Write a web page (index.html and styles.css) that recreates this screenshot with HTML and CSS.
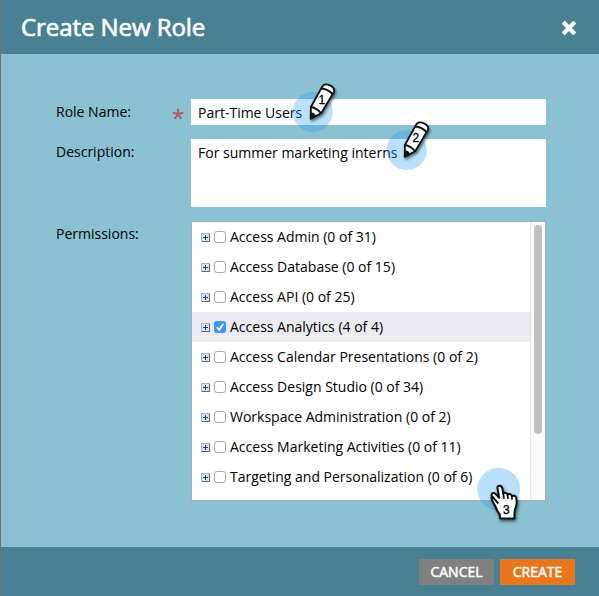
FILE: index.html
```html
<!DOCTYPE html>
<html lang="en">
<head>
<meta charset="utf-8">
<title>Create New Role</title>
<link rel="stylesheet" href="styles.css">
</head>
<body>
<svg width="0" height="0" class="defs" aria-hidden="true">
  <symbol id="plus" viewBox="0 0 9 9">
    <rect x=".5" y=".5" width="8" height="8" fill="#d8e3f0" stroke="#a3b5cf"/>
    <path d="M1 8.5H8.5V1" fill="none" stroke="#526b94"/>
    <path d="M2 4.5H7M4.5 2V7" stroke="#2a3c60"/>
  </symbol>
  <symbol id="pencil" viewBox="0 0 60 60">
    <circle cx="22.7" cy="37" r="20" fill="#2fa2f4" fill-opacity=".33"/>
    <g class="shadow" stroke="#111" stroke-width="1.8" stroke-linejoin="round">
      <path d="M20.8 43.6L20.9 32L32.2 11.8Q33.5 8.5 38 9.6Q45 12 44.2 16.5L31.2 38.3Z" fill="#fff"/>
      <path d="M20.9 32Q27 33 31.2 38.3M31.2 13.5Q38 14 42.6 19.2" fill="none"/>
      <path d="M20.8 43.6L21.1 38.2Q24 38.6 25.5 41.2Z" fill="#111"/>
    </g>
  </symbol>
</svg>
<main class="dialog">
  <header class="header">
    <h1>Create New Role</h1>
    <svg class="close" viewBox="0 0 14 14"><path d="M2.6 2.6L11.4 11.4M11.4 2.6L2.6 11.4" stroke="#fff" stroke-width="4.2" stroke-linecap="square"/></svg>
  </header>
  <form class="content">
    <label class="name-label">Role Name:</label>
    <svg class="required" viewBox="0 0 12 12"><path d="M6 6V.8M6 6L.8 4.8M6 6L11.2 4.8M6 6L2.8 10.7M6 6L9.2 10.7" stroke="#b95860" stroke-width="1.9"/></svg>
    <div class="field">Part-Time Users</div>
    <label class="desc-label">Description:</label>
    <div class="field area">For summer marketing interns</div>
    <label class="perm-label">Permissions:</label>
    <div class="tree">
      <ul>
        <li><svg class="plus"><use href="#plus"/></svg><i class="check"></i><span>Access Admin (0 of 31)</span></li>
        <li><svg class="plus"><use href="#plus"/></svg><i class="check"></i><span>Access Database (0 of 15)</span></li>
        <li><svg class="plus"><use href="#plus"/></svg><i class="check"></i><span>Access API (0 of 25)</span></li>
        <li class="selected"><svg class="plus"><use href="#plus"/></svg><i class="check on"><svg viewBox="0 0 12 12"><path d="M3 6.3L5.2 8.8L9.3 2.8" fill="none" stroke="#fff" stroke-width="1.7"/></svg></i><span>Access Analytics (4 of 4)</span></li>
        <li><svg class="plus"><use href="#plus"/></svg><i class="check"></i><span>Access Calendar Presentations (0 of 2)</span></li>
        <li><svg class="plus"><use href="#plus"/></svg><i class="check"></i><span>Access Design Studio (0 of 34)</span></li>
        <li><svg class="plus"><use href="#plus"/></svg><i class="check"></i><span>Workspace Administration (0 of 2)</span></li>
        <li><svg class="plus"><use href="#plus"/></svg><i class="check"></i><span>Access Marketing Activities (0 of 11)</span></li>
        <li><svg class="plus"><use href="#plus"/></svg><i class="check"></i><span>Targeting and Personalization (0 of 6)</span></li>
      </ul>
      <div class="track"><div class="thumb"></div></div>
    </div>
  </form>
  <footer class="footer">
    <button class="cancel">CANCEL</button>
    <button class="create">CREATE</button>
  </footer>
</main>
<svg class="marker one" viewBox="0 0 60 60"><use href="#pencil"/><text x="31.8" y="28.9" class="num">1</text></svg>
<svg class="marker two" viewBox="0 0 60 60"><use href="#pencil"/><text x="31.8" y="28.9" class="num">2</text></svg>
<svg class="marker three" viewBox="0 0 60 60">
  <circle cx="28.7" cy="29.3" r="21.5" fill="#2fa2f4" fill-opacity=".33"/>
  <path class="shadow" d="M28.3 43.5L21.9 36.2Q20.8 33.6 23.3 33Q25.2 32.8 26.8 35.2L29.2 37.8L27.5 28Q27.2 25.8 29.8 25.7Q31.8 25.7 32.3 28L33.2 33.5Q34.6 31.9 37 33.5L37.5 34.8Q39.3 32.9 41.5 35L41.8 36.3Q44.8 34.6 46.1 37.4Q47.3 42 46.1 46.4Q44.7 49.5 44.5 52.2L44.4 58.4H30.2L29.7 54.3Q26.7 50.6 25.5 46.6L22 40.2L21.3 36.5" fill="#fff" stroke="#111" stroke-width="2" stroke-linejoin="round"/>
  <path d="M33.2 33.5L34 38.8M37.5 34.8L38.1 39M41.8 36.3L42.1 39.6" fill="none" stroke="#111" stroke-width="1.7"/>
  <text x="36.4" y="53.9" class="num">3</text>
</svg>
</body>
</html>
```
FILE: styles.css
```css
* { box-sizing: border-box; }
body {
  margin: 0;
  position: relative;
  height: 596px;
  overflow: hidden;
  font: 14px/20px "Open Sans", "Noto Sans", sans-serif;
  color: #000;
}
.defs { position: absolute; }
.dialog {
  display: flex;
  flex-direction: column;
  height: 596px;
  border-left: 1px solid #736f72;
  background: #8ac1d3;
}
.header {
  display: flex;
  justify-content: space-between;
  align-items: center;
  height: 54px;
  padding: 0 23px 0 20px;
  background: #478193;
}
h1 {
  margin: 0;
  font-size: 24px;
  line-height: 54px;
  font-weight: 400;
  letter-spacing: -.06px;
  color: #fff;
  -webkit-text-stroke: .7px #fff;
}
.close { width: 14px; height: 14px; margin-top: 2px; }
.content {
  flex: 1;
  display: grid;
  grid-template-columns: 115px 20px 355px;
  grid-template-rows: 26px 68px 280px;
  row-gap: 14px;
  padding: 45px 0 0 55px;
}
label { grid-column: 1; line-height: 26px; }
.required { width: 12px; height: 12px; margin: 9px 0 0 1px; }
.field {
  grid-column: 3;
  padding: 4px 7px;
  background: #fff;
}
.tree {
  grid-column: 3;
  display: flex;
  border: 1px solid #a5afbc;
  background: #fff;
  overflow: hidden;
}
ul { flex: 1; margin: 0; padding: 0; list-style: none; }
li {
  display: flex;
  align-items: center;
  height: 30px;
  padding-left: 9px;
}
.selected { background: #ecebf1; }
.plus { width: 9px; height: 9px; margin-right: 4px; }
.check {
  width: 12px;
  height: 12px;
  margin-right: 4px;
  border: 1px solid #a8a8a8;
  border-radius: 3px;
  background: #fff;
}
.check.on { border: 0; background: #3a96fb; }
.check svg { display: block; }
.track {
  width: 15px;
  padding: 3px 3px 0;
  border-left: 1px solid #e6e6e6;
  background: #fafafa;
}
.thumb { width: 8px; height: 209px; border-radius: 4px; background: #c1c1c1; }
.footer {
  display: flex;
  justify-content: flex-end;
  gap: 6px;
  height: 49px;
  padding: 12px 24px 0 0;
  background: #478193;
}
button {
  width: 75px;
  height: 26px;
  padding: 0;
  border: 0;
  font: 14px/26px "Open Sans", "Noto Sans", sans-serif;
  color: #fff;
  -webkit-text-stroke: .5px #fff;
}
.cancel { background: #808080; }
.create { background: #e8761c; }
.marker { position: absolute; width: 60px; height: 60px; overflow: visible; }
.one { left: 290px; top: 75px; }
.two { left: 384px; top: 113px; }
.three { left: 470px; top: 460px; }
.shadow { filter: drop-shadow(1px 2px 1.5px rgba(0, 0, 0, .55)); }
.num { font: 12px "Liberation Sans", Arial, sans-serif; text-anchor: middle; stroke: #000; stroke-width: .3px; }
```
